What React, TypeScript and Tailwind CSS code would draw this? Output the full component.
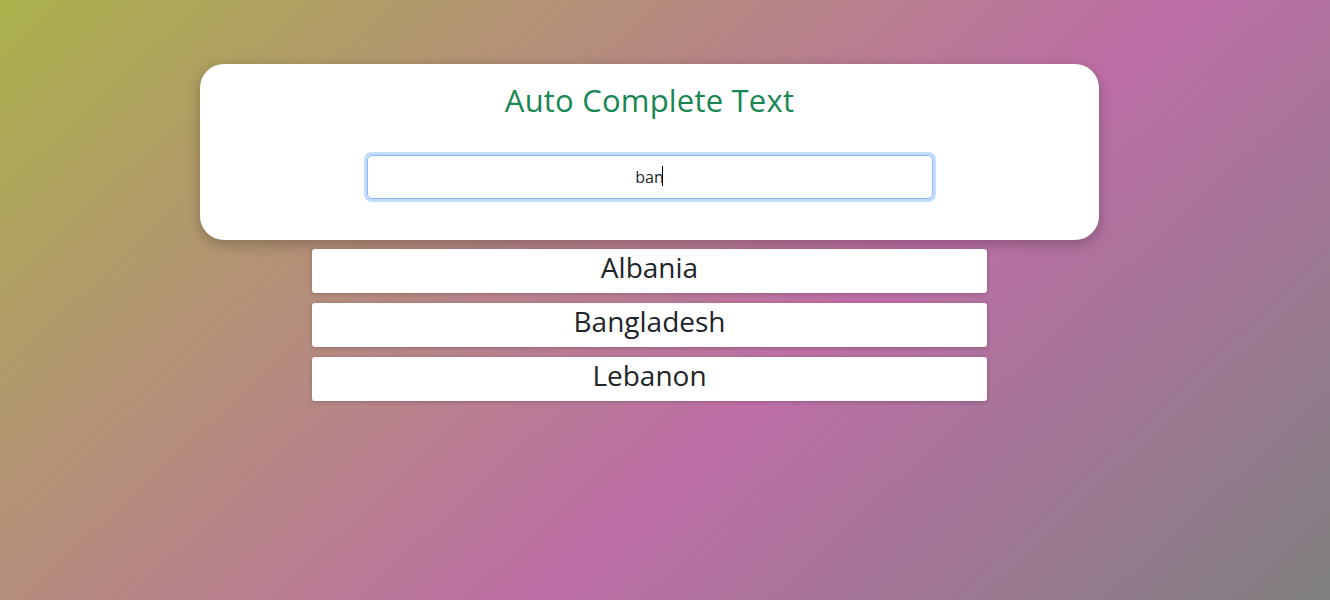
import { useState } from 'react'

const countries = ['Albania', 'Bangladesh', 'Lebanon']

export default function App() {
  const [query, setQuery] = useState('ban')

  return (
    <div
      className="min-h-screen w-full bg-[linear-gradient(137deg,#abb14b,#bd6ea6_60%,#808080)] font-['Open_Sans',sans-serif]"
    >
      <div className="w-[1299px] pt-16 flex flex-col items-center">
        <div className="w-[899px] h-[176px] bg-white rounded-[24px] shadow-[0_4px_14px_rgba(0,0,0,0.25)] flex flex-col items-center pt-[15px]">
          <h1 className="text-[31px] leading-[42px] text-[#198754] tracking-[0.2px]">Auto Complete Text</h1>
          <div className="relative mt-[34px]">
            <input
              autoFocus
              value={query}
              onChange={(e) => setQuery(e.target.value)}
              className="w-[566px] h-[44px] rounded-[5px] border border-[#86b7fe] shadow-[0_0_0_3px_rgba(13,110,253,0.25)] outline-none text-center text-[16px] text-[#212529] caret-black"
            />
            <span className="pointer-events-none absolute left-[295px] top-[11px] h-[20px] w-px bg-black" />
          </div>
        </div>
        <div className="w-[675px] mt-[9px] flex flex-col gap-[10px]">
          {countries.map((c) => (
            <div
              key={c}
              className="h-[44px] bg-white rounded-[3px] shadow-[0_1px_4px_rgba(0,0,0,0.2)] flex items-start justify-center text-[28px] leading-[36px] text-[#212529]"
            >
              {c}
            </div>
          ))}
        </div>
      </div>
    </div>
  )
}
